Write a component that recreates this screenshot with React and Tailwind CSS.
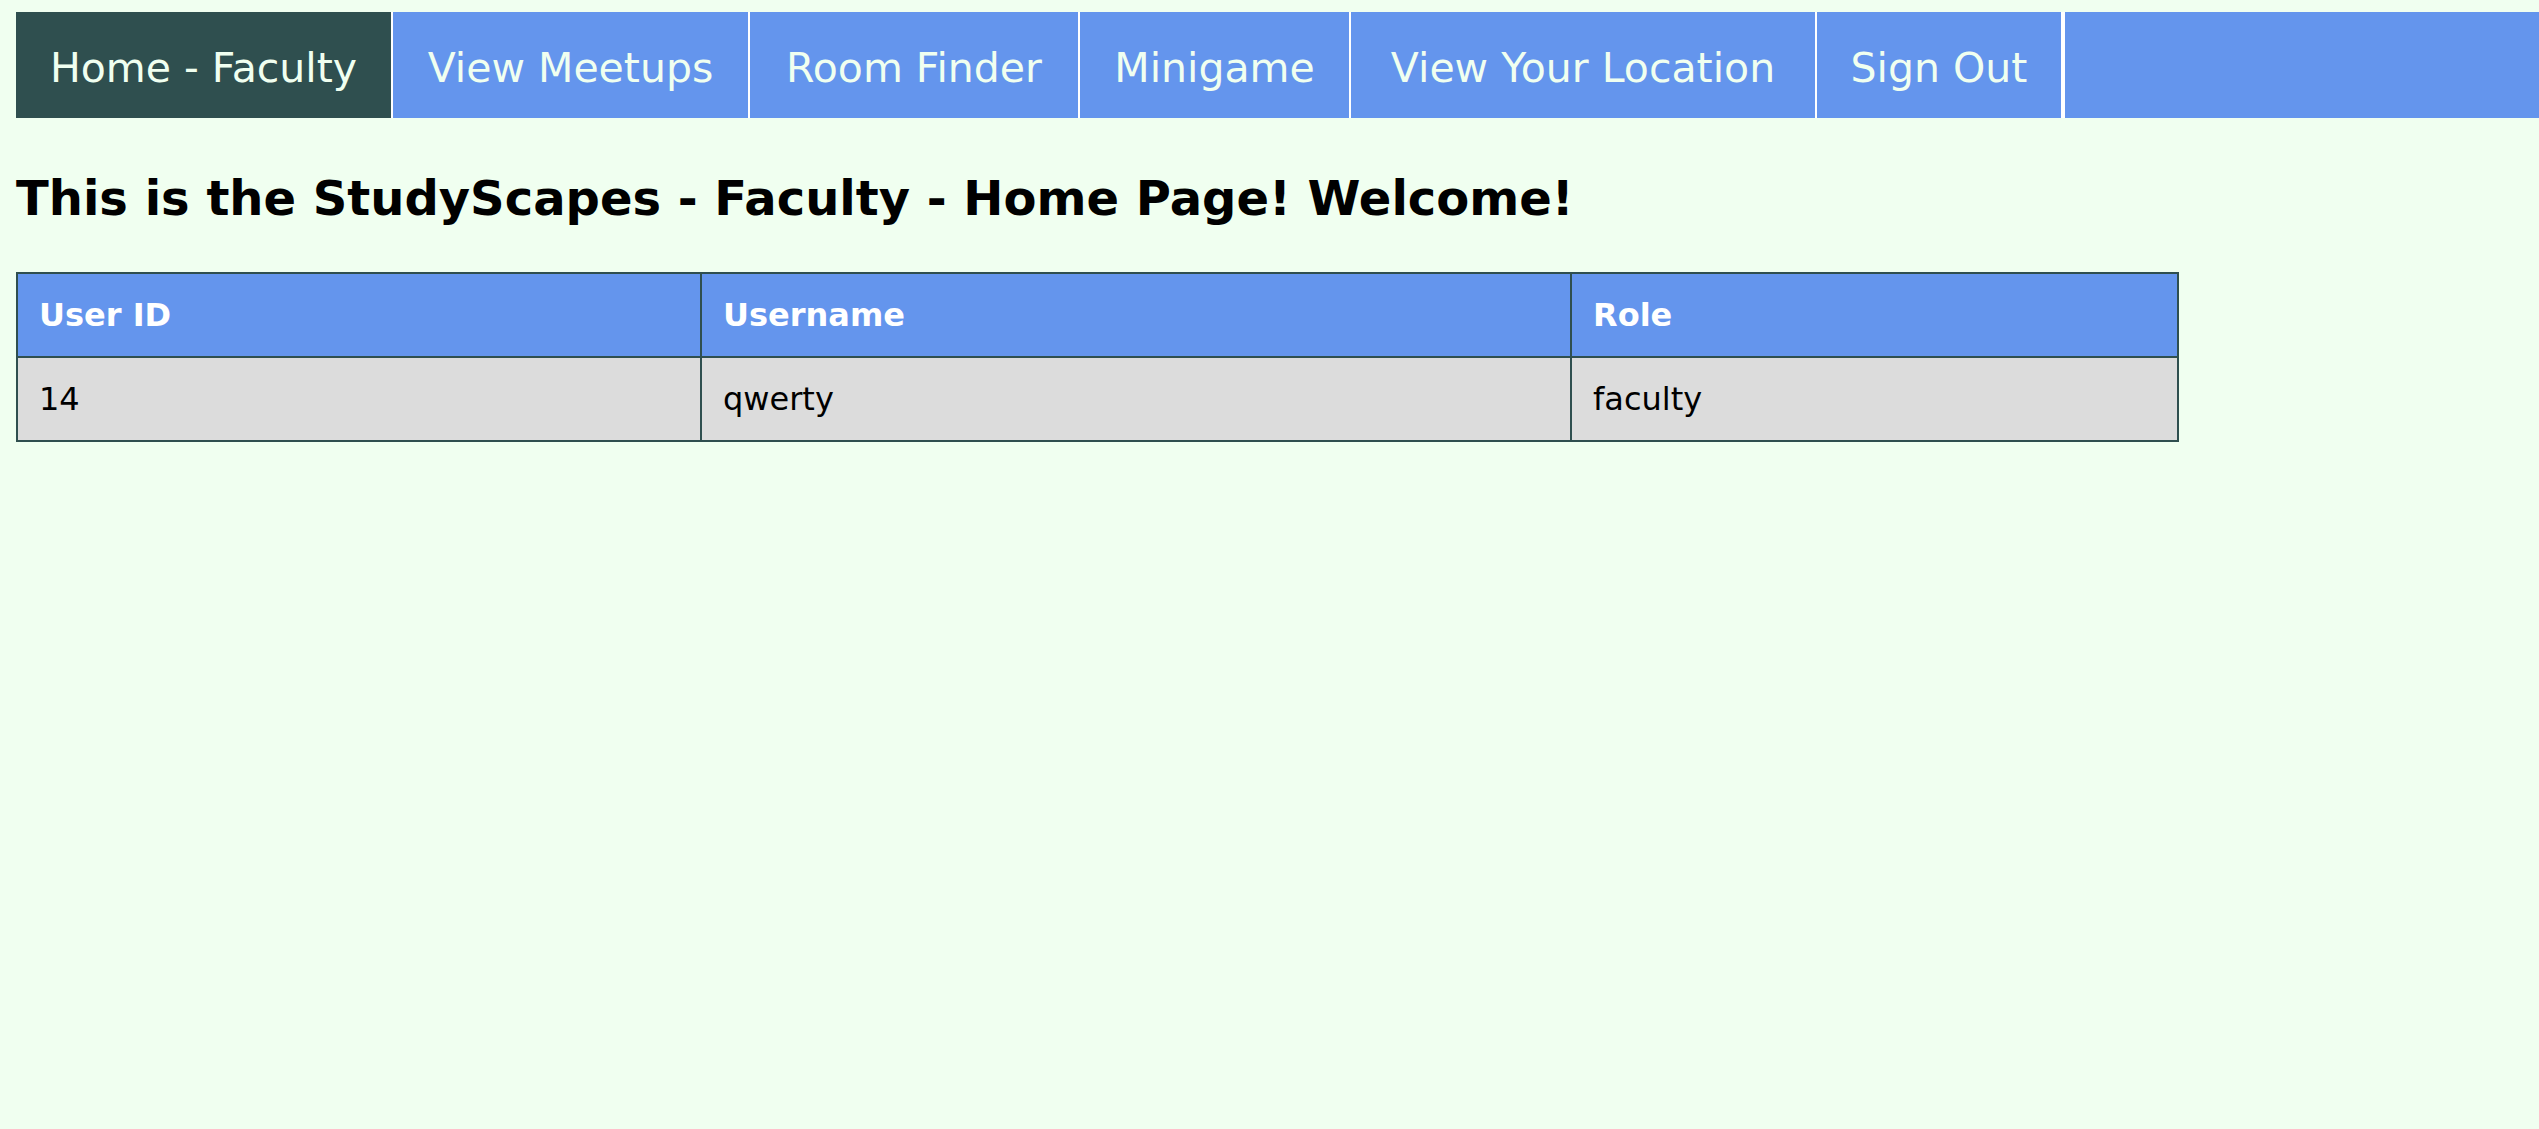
import React from 'react'

const navLinks = [
  { label: 'Home - Faculty', w: 'w-[377px]', active: true },
  { label: 'View Meetups', w: 'w-[357px]' },
  { label: 'Room Finder', w: 'w-[330px]' },
  { label: 'Minigame', w: 'w-[271px]' },
  { label: 'View Your Location', w: 'w-[466px]' },
  { label: 'Sign Out', w: 'w-[248px]', last: true },
]

const users = [{ id: 14, username: 'qwerty', role: 'faculty' }]

export default function App() {
  return (
    <div className="min-h-screen bg-[#f0fff0] pl-[16px] pt-[12px] text-black" style={{ fontFamily: '"DejaVu Sans", Verdana, sans-serif' }}>
      {/* Top nav */}
      <nav>
        <ul className="flex bg-[#6495ed]">
          {navLinks.map(({ label, w, active, last }) => (
            <li key={label}
              className={`${w} shrink-0 ${last ? 'border-r-4' : 'border-r-2'} border-white ${active ? 'bg-[#2f4f4f]' : 'bg-[#6495ed]'}`}>
              <a href="#" className="block pt-[33px] pb-[26px] text-center text-[41px] leading-[47px] whitespace-nowrap text-[#f0fff0]">
                {label}
              </a>
            </li>
          ))}
        </ul>
      </nav>

      <h1 className="mt-[52px] text-[48px] font-bold leading-[56px]">
        This is the StudyScapes - Faculty - Home Page! Welcome!
      </h1>

      {/* Users table */}
      <table className="mt-[46px] w-[2163px] border-collapse border-2 border-[#2f4f4f] text-left text-[32px]">
        <thead>
          <tr className="bg-[#6495ed] text-white">
            <th className="w-[684px] h-[84px] border-2 border-[#2f4f4f] px-[21px] font-bold">User ID</th>
            <th className="w-[870px] h-[84px] border-2 border-[#2f4f4f] px-[21px] font-bold">Username</th>
            <th className="h-[84px] border-2 border-[#2f4f4f] px-[21px] font-bold">Role</th>
          </tr>
        </thead>
        <tbody>
          {users.map(u => (
            <tr key={u.id} className="bg-[#dcdcdc]">
              <td className="h-[84px] border-2 border-[#2f4f4f] px-[21px]">{u.id}</td>
              <td className="h-[84px] border-2 border-[#2f4f4f] px-[21px]">{u.username}</td>
              <td className="h-[84px] border-2 border-[#2f4f4f] px-[21px]">{u.role}</td>
            </tr>
          ))}
        </tbody>
      </table>
    </div>
  )
}
